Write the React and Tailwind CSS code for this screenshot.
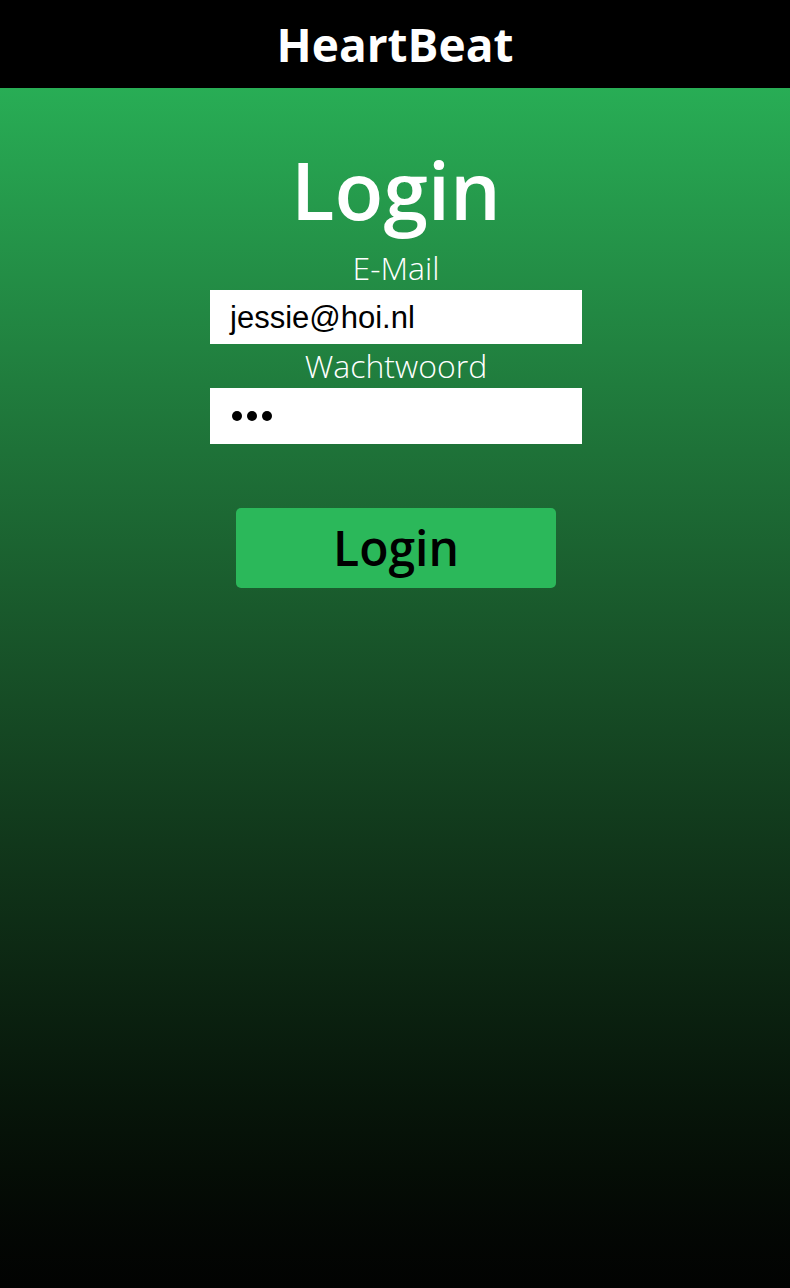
export default function App() {
  return (
    <div className="w-[790px] h-[1288px] flex flex-col" style={{ fontFamily: '"Open Sans", sans-serif' }}>
      <header className="h-[88px] bg-black flex items-center justify-center shrink-0">
        <h1 className="text-white text-[46px] font-bold leading-none">HeartBeat</h1>
      </header>
      <main className="flex-1 bg-gradient-to-b from-[#28ad55] to-[#020302] flex flex-col items-center">
        <h2 className="mt-[46px] text-white text-[80px] font-semibold leading-[110px] pl-[2px]">Login</h2>
        <label className="text-white text-[32px] font-light leading-[36px] mt-[6px] pl-[2px]">E-Mail</label>
        <div className="w-[372px] h-[54px] bg-white flex items-center pl-[20px] mt-[4px] ml-[2px]">
          <span className="text-black text-[31px] leading-none" style={{ fontFamily: '"Liberation Sans", Arial, sans-serif' }}>jessie@hoi.nl</span>
        </div>
        <label className="text-white text-[32px] font-light leading-[40px] mt-[2px] pl-[2px]">Wachtwoord</label>
        <div className="w-[372px] h-[56px] bg-white flex items-center gap-[5px] pl-[22px] mt-[2px] ml-[2px]">
          <span className="w-[10px] h-[10px] rounded-full bg-black"></span>
          <span className="w-[10px] h-[10px] rounded-full bg-black"></span>
          <span className="w-[10px] h-[10px] rounded-full bg-black"></span>
        </div>
        <button className="mt-[64px] ml-[2px] w-[320px] h-[80px] bg-[#2bb85a] rounded-[5px] text-black text-[48px] font-semibold leading-none">Login</button>
      </main>
    </div>
  );
}
